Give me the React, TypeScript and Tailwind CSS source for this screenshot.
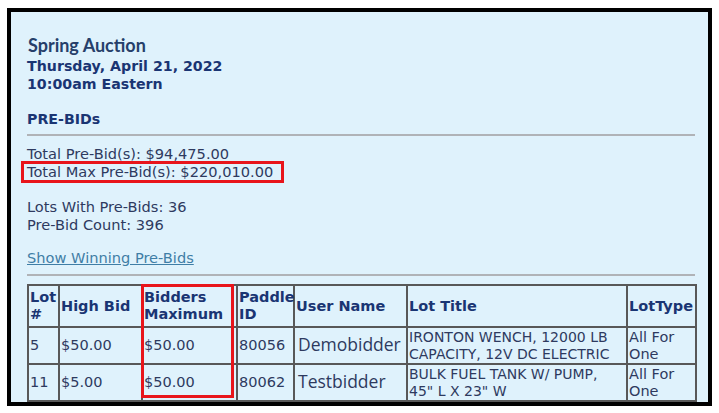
import React from "react";

const rows = [
  {
    lot: "5",
    high: "$50.00",
    max: "$50.00",
    paddle: "80056",
    user: "Demobidder :",
    title: ["IRONTON WENCH, 12000 LB", "CAPACITY, 12V DC ELECTRIC"],
    type: "All For One",
  },
  {
    lot: "11",
    high: "$5.00",
    max: "$50.00",
    paddle: "80062",
    user: "Testbidder",
    title: ["BULK FUEL TANK W/ PUMP,", '45" L X 23" W'],
    type: "All For One",
  },
];

const th =
  "border-2 border-[#585858] px-[1px] text-left align-middle font-bold text-[14.5px] leading-[17px] text-[#1a3573]";
const td =
  "border-2 border-[#585858] px-[1px] align-middle text-[14.5px] leading-[17px] text-[#2e3a5f]";

function App() {
  return (
    <div className="min-h-screen bg-white pl-[7px] pt-[8px]">
      <div
        className="h-[398px] w-[705px] overflow-hidden border-4 border-black bg-[#dff2fc] pl-[16px] pr-[13px] pt-[23px]"
        style={{ fontFamily: '"DejaVu Sans", Verdana, sans-serif' }}
      >
        <div className="pl-[1px] font-['Lato',sans-serif] text-[18px] font-bold leading-[20px] text-[#263f6a]">
          Spring Auction
        </div>
        <div className="mt-[2px] text-[14.2px] font-bold leading-[18px] text-[#1a3573]">
          <div>Thursday, April 21, 2022</div>
          <div>10:00am Eastern</div>
        </div>
        <div className="mt-[17px] text-[14.2px] font-bold leading-[18px] text-[#1a3573]">
          PRE-BIDs
        </div>
        <div className="mt-[6px] h-[2px] bg-[#b0b3b7]" />

        <div className="mt-[9px] text-[14.6px] leading-[18px] text-[#2e3a5f]">
          Total Pre-Bid(s): $94,475.00
        </div>
        <div className="mt-[1px] ml-[-3px] h-[16px] w-fit pl-[3px] pr-[8px] text-[14.6px] leading-[16px] text-[#2e3a5f] outline-3 outline-[#e8151b]">
          Total Max Pre-Bid(s): $220,010.00
        </div>

        <div className="mt-[18px] text-[14.6px] leading-[17.5px] text-[#2e3a5f]">
          <div>Lots With Pre-Bids: 36</div>
          <div>Pre-Bid Count: 396</div>
        </div>

        <a
          href="#"
          className="mt-[16px] block w-fit text-[14.6px] leading-[18px] text-[#3f7ea6] underline"
        >
          Show Winning Pre-Bids
        </a>
        <div className="mt-[7px] h-[2px] bg-[#b0b3b7]" />

        <div className="relative mt-[8px]">
          <table className="w-[668px] table-fixed border-collapse">
            <colgroup>
              <col className="w-[31px]" />
              <col className="w-[83px]" />
              <col className="w-[95px]" />
              <col className="w-[57px]" />
              <col className="w-[113px]" />
              <col className="w-[220px]" />
              <col className="w-[69px]" />
            </colgroup>
            <thead>
              <tr className="h-[42px]">
                <th className={th}>
                  Lot
                  <br />#
                </th>
                <th className={th}>High Bid</th>
                <th className={th}>
                  Bidders
                  <br />
                  Maximum
                </th>
                <th className={th}>
                  Paddle
                  <br />
                  ID
                </th>
                <th className={th}>User Name</th>
                <th className={th}>Lot Title</th>
                <th className={th}>LotType</th>
              </tr>
            </thead>
            <tbody>
              {rows.map((r) => (
                <tr key={r.lot} className="h-[37px]">
                  <td className={td}>{r.lot}</td>
                  <td className={td}>{r.high}</td>
                  <td className={td}>{r.max}</td>
                  <td className={td}>{r.paddle}</td>
                  <td className={td + " overflow-hidden whitespace-nowrap pl-[3px]"}>
                    <span className="font-['Open_Sans',sans-serif] text-[17.5px]">
                      {r.user}
                    </span>
                  </td>
                  <td className={td + " overflow-hidden whitespace-nowrap text-[14px] leading-[16.5px]"}>
                    <div>{r.title[0]}</div>
                    <div>{r.title[1]}</div>
                  </td>
                  <td className={td + " leading-[16.5px]"}>
                    <div>All For</div>
                    <div>One</div>
                  </td>
                </tr>
              ))}
            </tbody>
          </table>
          <div className="pointer-events-none absolute left-[114px] top-0 h-[114px] w-[93px] border-[3px] border-[#e8151b]" />
        </div>
      </div>
    </div>
  );
}

export default App;
